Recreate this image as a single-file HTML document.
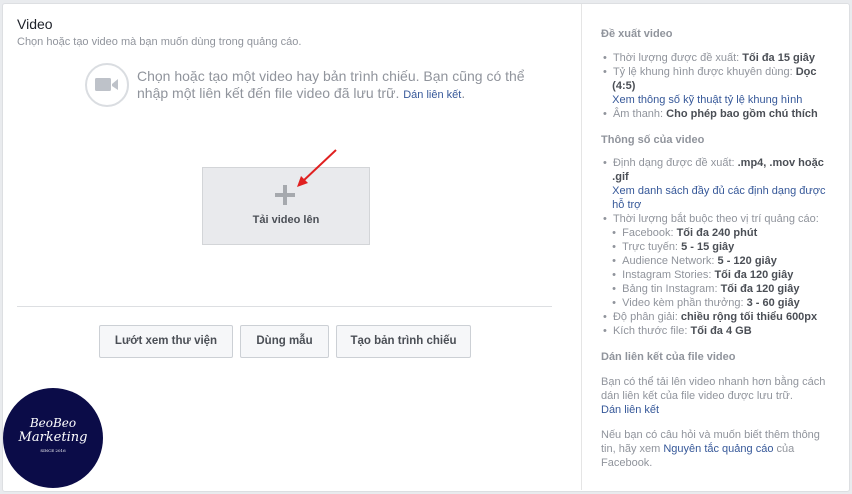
<!DOCTYPE html><html><head><meta charset="utf-8"><style>
body{margin:0;width:852px;height:494px;background:#e9ebee;font-family:"Liberation Sans",Arial,sans-serif;position:relative;overflow:hidden}
.p{position:absolute;left:2px;top:3px;width:846px;height:487px;background:#fff;border:1px solid #dddfe2;border-radius:3px}
.a{position:absolute;white-space:nowrap}
.r{position:absolute;left:581px;top:4px;width:266px;height:486px;border-left:1px solid #e5e5e5;background:#fff}
.rt{position:absolute;left:601px;font-size:11px;color:#90949c;line-height:14px;white-space:nowrap}
.rt b{color:#4b4f56}
.rt a{color:#365899}
.btn{position:absolute;top:325px;height:31px;border:1px solid #ccd0d5;background:#f6f7f9;border-radius:2px;font-size:11.5px;font-weight:bold;color:#4b4f56;text-align:center;line-height:31px}
</style></head><body>
<div class="p"></div>
<div class="r"></div>
<div class="a" style="left:17px;top:16px;font-size:14px;color:#1d2129">Video</div>
<div class="a" style="left:17px;top:36px;font-size:11px;color:#90949c">Chọn hoặc tạo video mà bạn muốn dùng trong quảng cáo.</div>
<svg class="a" style="left:83px;top:62px" width="48" height="46"><circle cx="24" cy="23" r="21" fill="none" stroke="#dadde1" stroke-width="2"/><rect x="12" y="16" width="16" height="13" rx="1.5" fill="#bec2c9"/><path d="M29 22 L35 17 V28 L29 24Z" fill="#bec2c9"/></svg>
<div class="a" style="left:137px;top:68px;font-size:14px;line-height:17px;color:#90949c">Chọn hoặc tạo một video hay bản trình chiếu. Bạn cũng có thể<br>nhập một liên kết đến file video đã lưu trữ. <span style="color:#365899;font-size:11px">Dán liên kết</span>.</div>
<div class="a" style="left:202px;top:167px;width:166px;height:76px;background:#e9eaed;border:1px solid #d3d5d8"></div>
<div class="a" style="left:275px;top:193px;width:20px;height:4px;background:#a6a9ae"></div>
<div class="a" style="left:283px;top:185px;width:4px;height:20px;background:#a6a9ae"></div>
<div class="a" style="left:202px;top:214px;width:168px;text-align:center;font-size:11px;font-weight:bold;color:#4b4f56">Tải video lên</div>
<svg class="a" style="left:290px;top:145px" width="52" height="48"><line x1="46" y1="5" x2="12" y2="37" stroke="#e02020" stroke-width="2"/><path d="M7 42 L11 31 L18 38Z" fill="#e02020"/></svg>
<div class="a" style="left:17px;top:306px;width:535px;height:1px;background:#dddfe2"></div>
<div class="btn" style="left:99px;width:132px">Lướt xem thư viện</div>
<div class="btn" style="left:240px;width:87px">Dùng mẫu</div>
<div class="btn" style="left:336px;width:133px">Tạo bản trình chiếu</div>
<div class="a" style="left:3px;top:388px;width:100px;height:100px;border-radius:50%;background:#0b0c48;color:#fff;text-align:center;font-family:'DejaVu Serif',serif;font-style:italic">
<div style="margin-top:28px;font-size:12px">BeoBeo</div><div style="font-size:13px">Marketing</div><div style="font-size:4px;font-style:normal;margin-top:3px">SINCE 2016</div></div>
<div class="rt" style="top:27px;font-weight:bold">Đề xuất video</div>
<div class="rt" style="top:51px;left:603px">• &nbsp;Thời lượng được đề xuất: <b>Tối đa 15 giây</b><br>• &nbsp;Tỷ lệ khung hình được khuyên dùng: <b>Dọc</b><br>&nbsp;&nbsp;&nbsp;<b>(4:5)</b><br>&nbsp;&nbsp;&nbsp;<a>Xem thông số kỹ thuật tỷ lệ khung hình</a><br>• &nbsp;Âm thanh: <b>Cho phép bao gồm chú thích</b></div>
<div class="rt" style="top:133px;font-weight:bold">Thông số của video</div>
<div class="rt" style="top:156px;left:603px">• &nbsp;Định dạng được đề xuất: <b>.mp4, .mov hoặc</b><br>&nbsp;&nbsp;&nbsp;<b>.gif</b><br>&nbsp;&nbsp;&nbsp;<a>Xem danh sách đầy đủ các định dạng được</a><br>&nbsp;&nbsp;&nbsp;<a>hỗ trợ</a><br>• &nbsp;Thời lượng bắt buộc theo vị trí quảng cáo:<br>&nbsp;&nbsp;&nbsp;• &nbsp;Facebook: <b>Tối đa 240 phút</b><br>&nbsp;&nbsp;&nbsp;• &nbsp;Trực tuyến: <b>5 - 15 giây</b><br>&nbsp;&nbsp;&nbsp;• &nbsp;Audience Network: <b>5 - 120 giây</b><br>&nbsp;&nbsp;&nbsp;• &nbsp;Instagram Stories: <b>Tối đa 120 giây</b><br>&nbsp;&nbsp;&nbsp;• &nbsp;Bảng tin Instagram: <b>Tối đa 120 giây</b><br>&nbsp;&nbsp;&nbsp;• &nbsp;Video kèm phần thưởng: <b>3 - 60 giây</b><br>• &nbsp;Độ phân giải: <b>chiều rộng tối thiểu 600px</b><br>• &nbsp;Kích thước file: <b>Tối đa 4 GB</b></div>
<div class="rt" style="top:350px;font-weight:bold">Dán liên kết của file video</div>
<div class="rt" style="top:375px">Bạn có thể tải lên video nhanh hơn bằng cách<br>dán liên kết của file video được lưu trữ.<br><a>Dán liên kết</a></div>
<div class="rt" style="top:428px">Nếu bạn có câu hỏi và muốn biết thêm thông<br>tin, hãy xem <a>Nguyên tắc quảng cáo</a> của<br>Facebook.</div>
</body></html>
